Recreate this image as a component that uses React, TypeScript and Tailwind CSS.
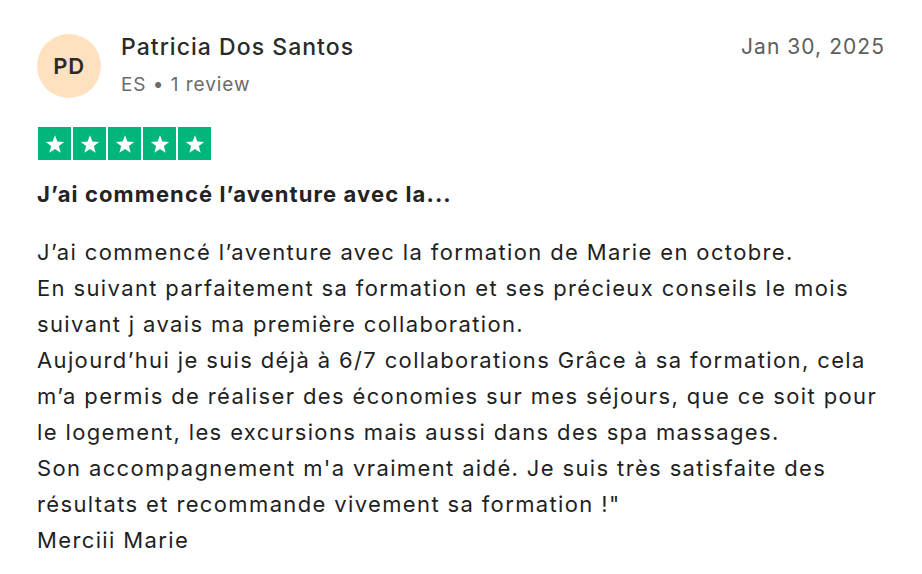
import React from 'react';

const Star: React.FC = () => (
  <div className="w-[33px] h-[33px] bg-[#00b67a] flex items-center justify-center">
    <svg viewBox="0 0 24 24" width="22" height="22" fill="#ffffff">
      <path d="M12 2.5l2.6 6.9 7.4.3-5.8 4.6 2 7.2L12 17.4l-6.2 4.1 2-7.2L2 9.7l7.4-.3z" />
    </svg>
  </div>
);

// line breaks follow the original card
const lines = [
  "J’ai commencé l’aventure avec la formation de Marie en octobre.",
  "En suivant parfaitement sa formation et ses précieux conseils le mois",
  "suivant j avais ma première collaboration.",
  "Aujourd’hui je suis déjà à 6/7 collaborations Grâce à sa formation, cela",
  "m’a permis de réaliser des économies sur mes séjours, que ce soit pour",
  "le logement, les excursions mais aussi dans des spa massages.",
  "Son accompagnement m'a vraiment aidé. Je suis très satisfaite des",
  "résultats et recommande vivement sa formation !\"",
  "Merciii Marie",
];

export default function App() {
  return (
    <div className="w-[922px] h-[574px] bg-white font-['Inter',sans-serif] text-[#1c1c1c] px-[37px] pt-[32px]">
      <div className="flex items-start justify-between">
        <div className="flex items-center gap-[20px]">
          <div className="w-[64px] h-[64px] rounded-full bg-[#ffe1c0] flex items-center justify-center text-[22px] font-semibold tracking-[0.03em] text-[#2a2a2a]">
            PD
          </div>
          <div className="flex flex-col">
            <span className="text-[23px] font-medium leading-[30px] tracking-[0.045em] text-[#2a2a2a]">Patricia Dos Santos</span>
            <span className="text-[19px] leading-[30px] mt-[8px] tracking-[0.05em] text-[#6b6b6b]">ES • 1 review</span>
          </div>
        </div>
        <span className="text-[21px] leading-[30px] tracking-[0.05em] text-[#5e5e5e]">Jan 30, 2025</span>
      </div>

      <div className="flex gap-[2px] mt-[27px] ml-[1px]">
        <Star /><Star /><Star /><Star /><Star />
      </div>

      <h3 className="text-[22px] font-bold mt-[19px] leading-[30px] tracking-[0.05em] text-[#232323]">J’ai commencé l’aventure avec la...</h3>

      <div className="mt-[25px] text-[22px] leading-[36px] tracking-[0.062em] text-[#1f1f1f] whitespace-nowrap">
        {lines.map((l) => (
          <p key={l}>{l}</p>
        ))}
      </div>
    </div>
  );
}
